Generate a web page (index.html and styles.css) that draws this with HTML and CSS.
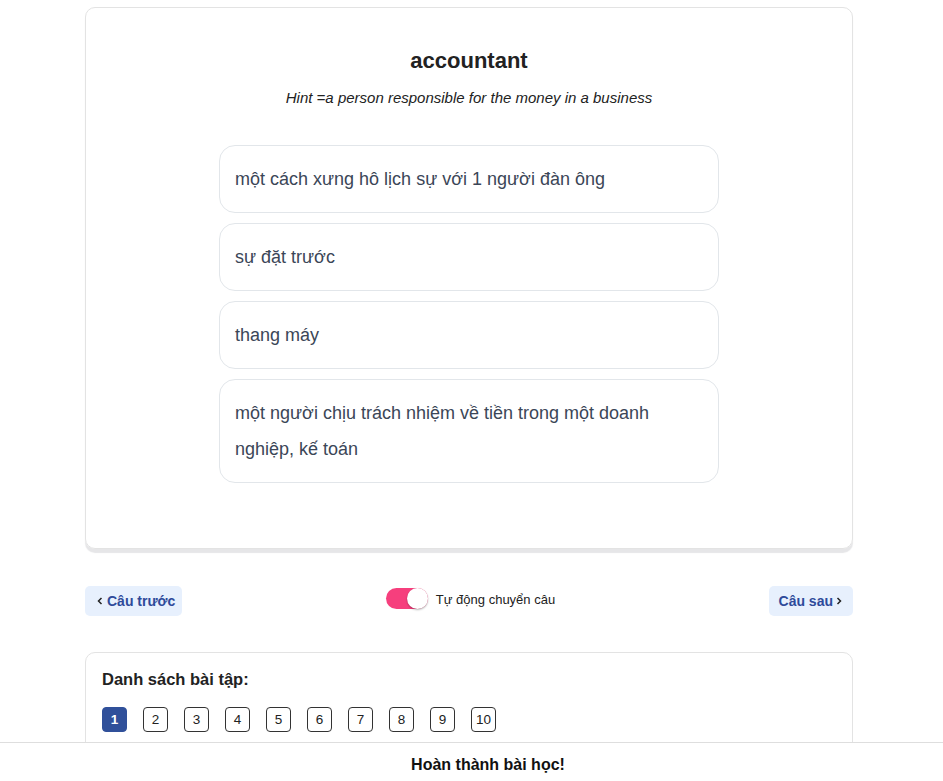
FILE: index.html
```html
<!DOCTYPE html>
<html lang="vi">
<head>
<meta charset="utf-8">
<title>accountant</title>
<link rel="stylesheet" href="styles.css">
</head>
<body>
<div class="page">
  <main class="wrap">
    <section class="quiz-card">
      <h1 class="word">accountant</h1>
      <p class="hint">Hint =a person responsible for the money in a business</p>
      <div class="options">
        <div class="option">một cách xưng hô lịch sự với 1 người đàn ông</div>
        <div class="option">sự đặt trước</div>
        <div class="option">thang máy</div>
        <div class="option">một người chịu trách nhiệm về tiền trong một doanh nghiệp, kế toán</div>
      </div>
    </section>

    <nav class="nav-row">
      <div class="nav-left">
        <button class="nav-btn prev"><svg class="chev" viewBox="0 0 8 10" width="8" height="10"><polyline points="5.5,2 2.5,5 5.5,8" fill="none" stroke="#222" stroke-width="1.5"/></svg>Câu trước</button>
      </div>
      <label class="auto">
        <span class="switch"><span class="knob"></span></span>
        <span class="auto-label">Tự động chuyển câu</span>
      </label>
      <div class="nav-right">
        <button class="nav-btn next">Câu sau<svg class="chev" viewBox="0 0 8 10" width="8" height="10"><polyline points="2.5,2 5.5,5 2.5,8" fill="none" stroke="#222" stroke-width="1.5"/></svg></button>
      </div>
    </nav>

    <section class="list-card">
      <h2 class="list-title">Danh sách bài tập:</h2>
      <div class="nums">
        <span class="num active">1</span>
        <span class="num">2</span>
        <span class="num">3</span>
        <span class="num">4</span>
        <span class="num">5</span>
        <span class="num">6</span>
        <span class="num">7</span>
        <span class="num">8</span>
        <span class="num">9</span>
        <span class="num">10</span>
      </div>
    </section>
  </main>
  <footer class="finish">Hoàn thành bài học!</footer>
</div>
</body>
</html>
```

FILE: styles.css
```css
* { box-sizing: border-box; }
html, body { margin: 0; padding: 0; background: #fff; }
body {
  font-family: "Liberation Sans", Arial, sans-serif;
  color: #222;
}
.page { padding-right: 5px; }
.wrap {
  width: 768px;
  margin: 0 auto;
  padding-top: 7px;
  padding-bottom: 120px;
}
.quiz-card {
  border: 1px solid #e3e3e3;
  border-radius: 10px;
  padding: 36px 0 65px;
  box-shadow: 0 4px 1px #e6e6e8;
  display: flex;
  flex-direction: column;
  align-items: center;
}
.word {
  margin: 0;
  font-size: 22px;
  line-height: 33px;
  font-weight: 700;
  color: #222;
}
.hint {
  margin: 10px 0 0;
  font-size: 15px;
  line-height: 21px;
  font-style: italic;
  color: #222;
}
.options {
  margin-top: 37px;
  width: 500px;
  display: flex;
  flex-direction: column;
  gap: 10px;
}
.option {
  border: 1px solid #e2e6ea;
  border-radius: 16px;
  padding: 15px 60px 15px 15px;
  font-size: 18px;
  line-height: 36px;
  color: #3b4657;
}
.nav-row {
  margin-top: 37px;
  display: grid;
  grid-template-columns: 1fr auto 1fr;
  align-items: center;
}
.nav-right { display: flex; justify-content: flex-end; }
.nav-btn {
  font-family: inherit;
  height: 30px;
  border: none;
  border-radius: 5px;
  background: #e7f0fd;
  color: #2e4a9a;
  font-size: 14px;
  font-weight: 700;
  padding: 0 10px;
  display: inline-flex;
  align-items: center;
  gap: 2px;
}
.nav-btn.prev { padding: 0 7px 0 11px; gap: 3px; }
.chev { display: block; }
.auto {
  display: flex;
  align-items: center;
  gap: 8px;
  margin-top: -4px;
  margin-left: 3px;
}
.switch {
  width: 42px;
  height: 21px;
  border-radius: 11px;
  background: #f63f7d;
  position: relative;
  margin-top: -2px;
}
.knob {
  position: absolute;
  right: 0;
  top: 0;
  width: 21px;
  height: 21px;
  border-radius: 50%;
  background: #fff;
  box-shadow: 0 1px 2px rgba(0,0,0,0.3);
}
.auto-label {
  font-size: 13px;
  color: #222;
}
.list-card {
  margin-top: 36px;
  border: 1px solid #e3e3e3;
  border-radius: 10px;
  padding: 15px 16px 40px;
}
.list-title {
  margin: 0;
  font-size: 16.5px;
  line-height: 22px;
  font-weight: 700;
  color: #222;
}
.nums {
  margin-top: 17px;
  display: flex;
  gap: 16px;
}
.num {
  min-width: 25px;
  height: 25px;
  border: 1px solid #333;
  border-radius: 4px;
  display: inline-flex;
  align-items: center;
  justify-content: center;
  font-size: 13.5px;
  color: #222;
  padding: 0 3px;
}
.num.active {
  background: #30509a;
  border-color: #30509a;
  color: #fff;
  font-weight: 700;
}
.finish {
  position: fixed;
  left: 0;
  right: 0;
  bottom: 0;
  height: 39px;
  background: #fff;
  border-top: 1px solid #dedede;
  display: flex;
  align-items: center;
  justify-content: center;
  padding: 5px 0 0 33px;
  font-size: 16px;
  font-weight: 700;
  color: #111;
}
```
